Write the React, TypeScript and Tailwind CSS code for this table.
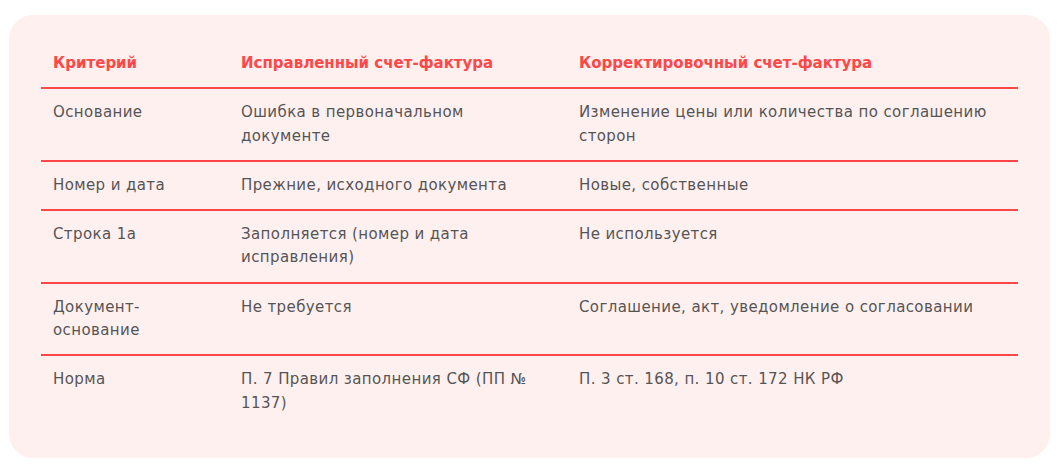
const ROWS = [
  ['Основание', 'Ошибка в первоначальном документе', 'Изменение цены или количества по соглашению сторон'],
  ['Номер и дата', 'Прежние, исходного документа', 'Новые, собственные'],
  ['Строка 1а', 'Заполняется (номер и дата исправления)', 'Не используется'],
  ['Документ-основание', 'Не требуется', 'Соглашение, акт, уведомление о согласовании'],
  ['Норма', 'П. 7 Правил заполнения СФ (ПП № 1137)', 'П. 3 ст. 168, п. 10 ст. 172 НК РФ'],
]

export default function App() {
  return (
    <div className="min-h-[465px] bg-white pl-[9px] pr-[10px] pt-[15px] font-['DejaVu_Sans',sans-serif]">
      <div className="rounded-[24px] bg-[#fff0f0] px-8 pt-[25px] pb-[31px]">
        <table className="w-full table-fixed border-collapse text-[15px] leading-[23.3px]">
          <colgroup>
            <col className="w-[188px]" />
            <col className="w-[338px]" />
            <col />
          </colgroup>
          <thead>
            <tr className="border-b-2 border-[#ff4747]">
              <th className="px-3 py-3 text-left font-bold text-[#ff4747]">Критерий</th>
              <th className="px-3 py-3 text-left font-bold text-[#ff4747]">Исправленный счет-фактура</th>
              <th className="px-3 py-3 text-left font-bold text-[#ff4747]">Корректировочный счет-фактура</th>
            </tr>
          </thead>
          <tbody>
            {ROWS.map((r, i) => (
              <tr key={i} className={i < ROWS.length - 1 ? 'border-b-2 border-[#ff4747]' : ''}>
                {r.map((c, j) => (
                  <td key={j} className="px-3 py-3 align-top tracking-[0.4px] text-[#555555]">{c}</td>
                ))}
              </tr>
            ))}
          </tbody>
        </table>
      </div>
    </div>
  )
}
